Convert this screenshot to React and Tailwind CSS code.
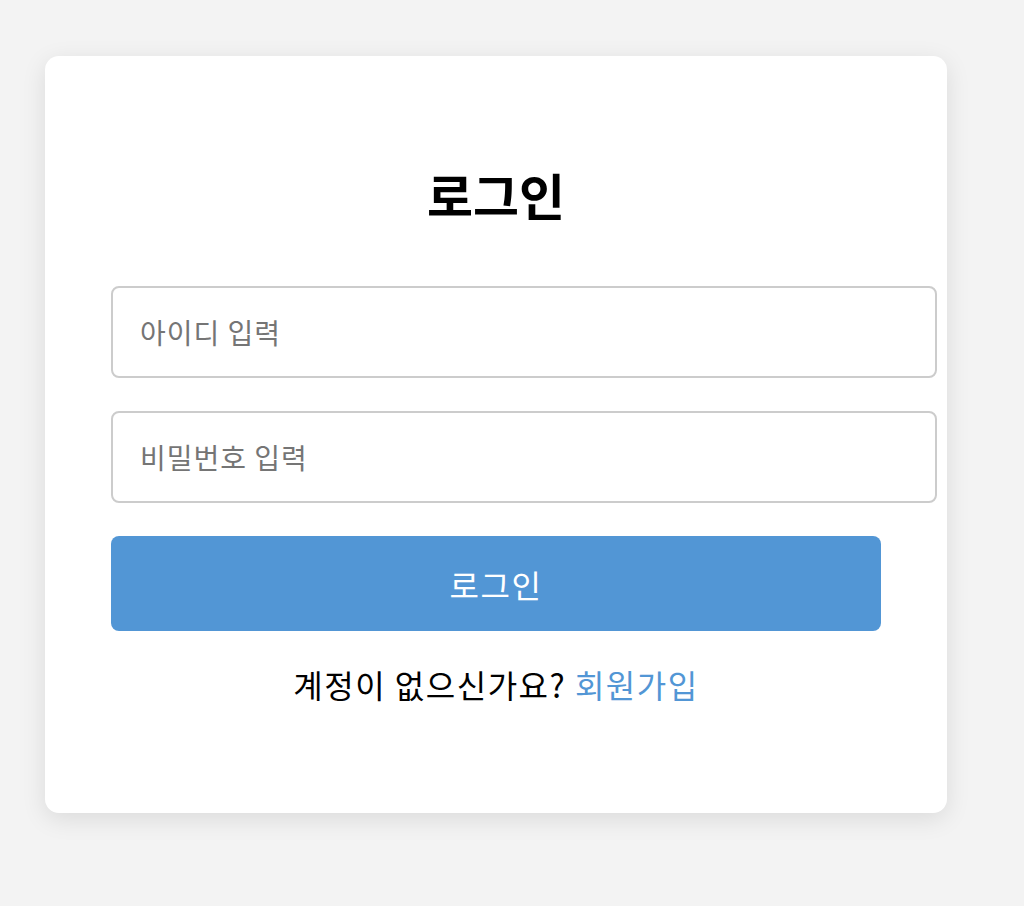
import React from 'react';

export default function App() {
  return (
    <div
      className="min-h-[906px] w-full bg-[#f3f3f3] pt-[56px] pl-[45px]"
      style={{ fontFamily: '"Noto Sans CJK KR", "Noto Sans", sans-serif' }}
    >
      <div className="w-[902px] h-[757px] bg-white rounded-[14px] shadow-[0_6px_24px_rgba(0,0,0,0.10)] px-[66px] pt-[100px]">
        <h1 className="text-center text-[50px] leading-[76px] font-bold text-black">로그인</h1>

        <form className="mt-[54px] flex flex-col" onSubmit={(e) => e.preventDefault()}>
          <input
            type="text"
            placeholder="아이디 입력"
            className="w-[826px] h-[92px] border-2 border-[#cccccc] rounded-[8px] px-[27px] text-[28px] tracking-[1px] text-black placeholder:text-[#757575] outline-none"
          />
          <input
            type="password"
            placeholder="비밀번호 입력"
            className="mt-[33px] w-[826px] h-[92px] border-2 border-[#cccccc] rounded-[8px] px-[27px] text-[28px] tracking-[1px] text-black placeholder:text-[#757575] outline-none"
          />
          <button
            type="submit"
            className="mt-[33px] w-[770px] h-[95px] rounded-[8px] bg-[#5296d5] text-white text-[32px] tracking-[1.5px]"
          >
            로그인
          </button>
        </form>

        <p className="mt-[33px] text-center text-[32px] tracking-[1.5px] leading-[40px] text-black">
          계정이 없으신가요? <a href="#" className="text-[#5296d5]">회원가입</a>
        </p>
      </div>
    </div>
  );
}
